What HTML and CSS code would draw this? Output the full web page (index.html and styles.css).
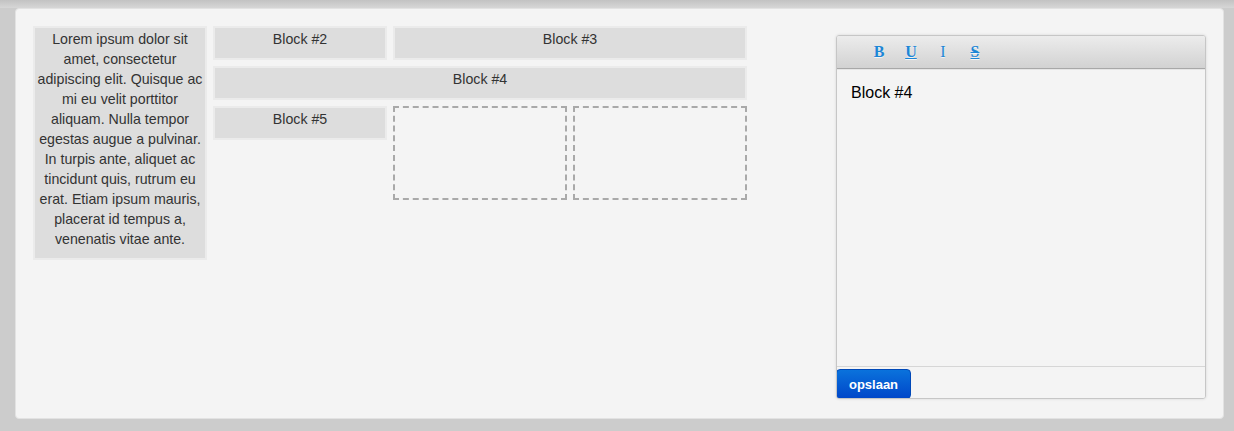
FILE: index.html
```html
<!DOCTYPE html>
<html>
<head>
<meta charset="utf-8">
<link rel="stylesheet" href="styles.css">
</head>
<body>
<div class="panel">
  <div class="grid">
    <div class="block lorem">Lorem ipsum dolor sit amet, consectetur adipiscing elit. Quisque ac mi eu velit porttitor aliquam. Nulla tempor egestas augue a pulvinar. In turpis ante, aliquet ac tincidunt quis, rutrum eu erat. Etiam ipsum mauris, placerat id tempus a, venenatis vitae ante.</div>
    <div class="block b2">Block #2</div>
    <div class="block b3">Block #3</div>
    <div class="block b4">Block #4</div>
    <div class="block b5">Block #5</div>
    <div class="slot s1"></div>
    <div class="slot s2"></div>
  </div>
  <div class="editor">
    <div class="toolbar">
      <span class="tb tb-b">B</span>
      <span class="tb tb-u">U</span>
      <span class="tb tb-i">I</span>
      <span class="tb tb-s">S</span>
    </div>
    <div class="content">Block #4</div>
    <div class="footer"><button class="save">opslaan</button></div>
  </div>
</div>
</body>
</html>
```
FILE: styles.css
```css
html, body {
  margin: 0;
  height: 100%;
}
body {
  background: linear-gradient(to bottom, #c2c2c2 0, #d6d6d6 8px, #cccccc 8px);
  padding: 8px 10px 12px 15px;
  box-sizing: border-box;
  font-family: "Liberation Sans", Arial, sans-serif;
}
.panel {
  box-sizing: border-box;
  height: 411px;
  background: #f4f4f4;
  border: 1px solid #e2e2e2;
  border-radius: 4px;
  padding: 17px 17px 0 17px;
  display: flex;
  justify-content: space-between;
  align-items: flex-start;
}
.grid {
  display: grid;
  grid-template-columns: repeat(4, 174px);
  grid-auto-rows: 34px;
  gap: 6px;
}
.block {
  box-sizing: border-box;
  background: #dddddd;
  border: 2px solid #ebebeb;
  color: #333;
  font-size: 14.2px;
  line-height: 20px;
  padding-top: 1px;
  text-align: center;
}
.lorem {
  grid-column: 1;
  grid-row: 1 / span 6;
}
.b2 { grid-column: 2; grid-row: 1; }
.b3 { grid-column: 3 / span 2; grid-row: 1; }
.b4 { grid-column: 2 / span 3; grid-row: 2; }
.b5 { grid-column: 2; grid-row: 3; }
.slot {
  box-sizing: border-box;
  border: 2px dashed #a9a9a9;
  height: 94px;
  align-self: start;
  grid-row: 3 / span 3;
}
.s1 { grid-column: 3; }
.s2 { grid-column: 4; }

.editor {
  margin-top: 9px;
  width: 370px;
  height: 364px;
  box-sizing: border-box;
  border: 1px solid #c6c6c6;
  border-radius: 3px;
  box-shadow: 0 0 3px rgba(0,0,0,0.12);
  display: flex;
  flex-direction: column;
  overflow: hidden;
}
.toolbar {
  height: 33px;
  flex: none;
  box-sizing: border-box;
  background: linear-gradient(to bottom, #ececec, #d2d2d2);
  border-bottom: 1px solid #a8a8a8;
  display: flex;
  align-items: center;
  padding-left: 26px;
}
.tb {
  width: 32px;
  text-align: center;
  font-family: "Liberation Serif", "Times New Roman", serif;
  font-weight: bold;
  font-size: 16px;
  color: #1d86d6;
  text-shadow: 0 1px 0 rgba(255,255,255,0.7);
}
.tb-u { text-decoration: underline; }
.tb-i { font-weight: normal; }
.tb-s { text-decoration: line-through underline; }
.content {
  flex: 1;
  background: #f4f4f4;
  border-top: 1px solid #e6e6e6;
  border-bottom: 1px solid #d6d6d6;
  padding: 14px 14px;
  font-size: 16px;
  line-height: 18px;
  color: #000;
}
.footer {
  height: 31px;
  flex: none;
  background: #f4f4f4;
  display: flex;
  align-items: flex-end;
}
.save {
  width: 75px;
  height: 30px;
  border: 1px solid #0048b8;
  border-radius: 4px;
  background: linear-gradient(to bottom, #0a72dc, #0047c9);
  color: #fff;
  font-family: "Liberation Sans", Arial, sans-serif;
  font-weight: bold;
  font-size: 13px;
  padding: 0;
  margin-left: -1px;
  margin-bottom: -1px;
}
```
